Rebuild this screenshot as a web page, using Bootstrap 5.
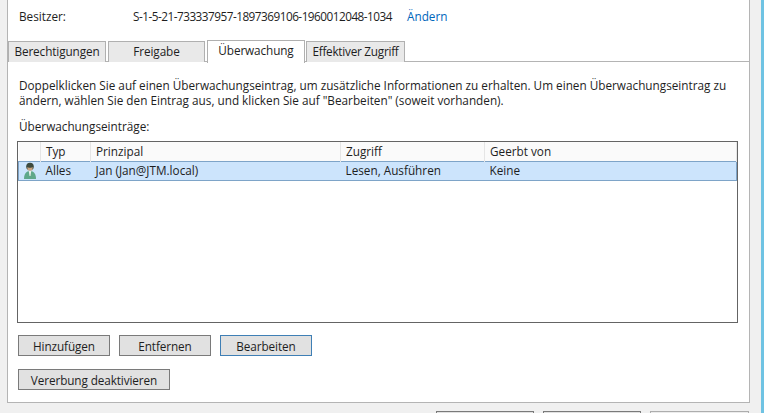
<!DOCTYPE html>
<html lang="de"><head><meta charset="utf-8"><title>Überwachung</title>
<link href="https://cdn.jsdelivr.net/npm/bootstrap@5.3.0/dist/css/bootstrap.min.css" rel="stylesheet">
<style>
html,body{height:413px;overflow:hidden}
body{background:#f0f0f0;font:11.75px/16px "Open Sans","Noto Sans",sans-serif;color:#1e1e1e;width:764px;position:relative}
.sky{position:absolute;right:0;top:0;bottom:0;width:3px;background:#6fc3e3}
.panel{margin-left:7px;width:743px;height:403px;background:#fff;border:1px solid #b4b4b4;border-width:0 1px 1px 1px;padding-top:8px}
.owner{padding-left:11px;height:33px}
.owner .lbl{width:114px}
.owner .sid{letter-spacing:-.5px;width:274px}
.owner a{color:#0066bb;text-decoration:none}
.wtabs{height:21px;gap:2px;border-bottom:1px solid #b4b4b4;flex-wrap:nowrap}
.wtab{width:98px;height:21px;background:#e9e9e9;border:1px solid #b0b0b0;border-bottom:0;text-align:center;line-height:19px;color:#1e1e1e;padding:0;white-space:nowrap;letter-spacing:-.1px}
.wtab.f2{width:97px}
.wtab.on{background:#fff;height:23px;margin-top:-1px;position:relative;z-index:1;margin-right:-1px}
.wtab.w2{width:99px;letter-spacing:-.25px}
.info{padding:16px 0 0 11px;line-height:15px;height:56px}
.cap{padding-left:11px;height:23px;line-height:16px}
.lst{margin:0 11px 0 9px;height:182px;border:1px solid #646464}
.lst .table{margin:0;table-layout:fixed;width:100%;--bs-table-bg:transparent;font-size:11.75px}
.lst th,.lst td{padding:0 0 0 5px;font-weight:400;border:0;height:19px;line-height:16px;color:#1e1e1e;white-space:nowrap}
.lst th{background:#fafafa;border-right:1px solid #e5e5e5;box-shadow:none;vertical-align:top;padding-top:1px}
.lst tr.sel td{background:#cce4fc;border-top:1px solid #7ea4c8;border-bottom:1px solid #7ea4c8;height:19px;line-height:16px}
.lst tr.sel td:first-child{border-left:1px solid #7ea4c8;padding:0 0 0 4px}
.lst tr.sel td:last-child{border-right:1px solid #7ea4c8}
.wbtn{height:21px;width:92px;padding:0;border:1px solid #7a7a7a;border-radius:0;background:#e1e1e1;font-size:11.75px;line-height:18px;color:#1e1e1e;letter-spacing:-.1px}
.wbtn:hover{background:#e1e1e1;color:#1e1e1e;border-color:#7a7a7a}
.wbtn.foc{border-color:#3f7fb5}
.wbtn.big{width:152px}
.rowa{padding:12px 0 0 10px;gap:9px}
.rowb{padding:13px 0 0 10px}
.foot{position:absolute;top:411px;left:436px;gap:9px}
.foot span{display:block;width:98px;height:10px;border:1px solid #7a7a7a;background:#e1e1e1}
.foot span.off{border-color:#adadad;width:99px;background:#ececec}
.ico{display:block}
</style></head>
<body>
<div class="sky"></div>
<div class="panel">
  <div class="owner d-flex align-items-start"><div class="lbl">Besitzer:</div><div class="sid">S-1-5-21-733337957-1897369106-1960012048-1034</div><a href="#">Ändern</a></div>
  <div class="wtabs d-flex">
    <div class="wtab">Berechtigungen</div><div class="wtab f2">Freigabe</div><div class="wtab on">Überwachung</div><div class="wtab w2">Effektiver Zugriff</div>
  </div>
  <div class="info">Doppelklicken Sie auf einen Überwachungseintrag, um zusätzliche Informationen zu erhalten. Um einen Überwachungseintrag zu<br>ändern, wählen Sie den Eintrag aus, und klicken Sie auf "Bearbeiten" (soweit vorhanden).</div>
  <div class="cap">Überwachungseinträge:</div>
  <div class="lst">
    <table class="table">
      <colgroup><col style="width:22px"><col style="width:50px"><col style="width:250px"><col style="width:144px"><col></colgroup>
      <thead><tr><th></th><th>Typ</th><th>Prinzipal</th><th>Zugriff</th><th>Geerbt von</th></tr></thead>
      <tbody><tr class="sel"><td><svg class="ico" width="14" height="17" viewBox="0 0 14 17"><path d="M1 17c0-5 2-8 6-8s6 3 6 8z" fill="#5fa88a"/><path d="M5.800 9h2.400l-.7 5h-1z" fill="#e8f0e8"/><circle cx="7" cy="4.500" r="3.800" fill="#3c4a3e"/><path d="M4.200 5c.5 1 5.100 1 5.600 0l-.6 3.500H4.800z" fill="#c9a27e"/></svg></td><td>Alles</td><td>Jan (Jan@JTM.local)</td><td>Lesen, Ausführen</td><td>Keine</td></tr></tbody>
    </table>
  </div>
  <div class="rowa d-flex">
    <button class="btn wbtn">Hinzufügen</button><button class="btn wbtn">Entfernen</button><button class="btn wbtn foc">Bearbeiten</button>
  </div>
  <div class="rowb"><button class="btn wbtn big">Vererbung deaktivieren</button></div>
</div>
<div class="foot d-flex"><span></span><span></span><span class="off"></span></div>
</body></html>
